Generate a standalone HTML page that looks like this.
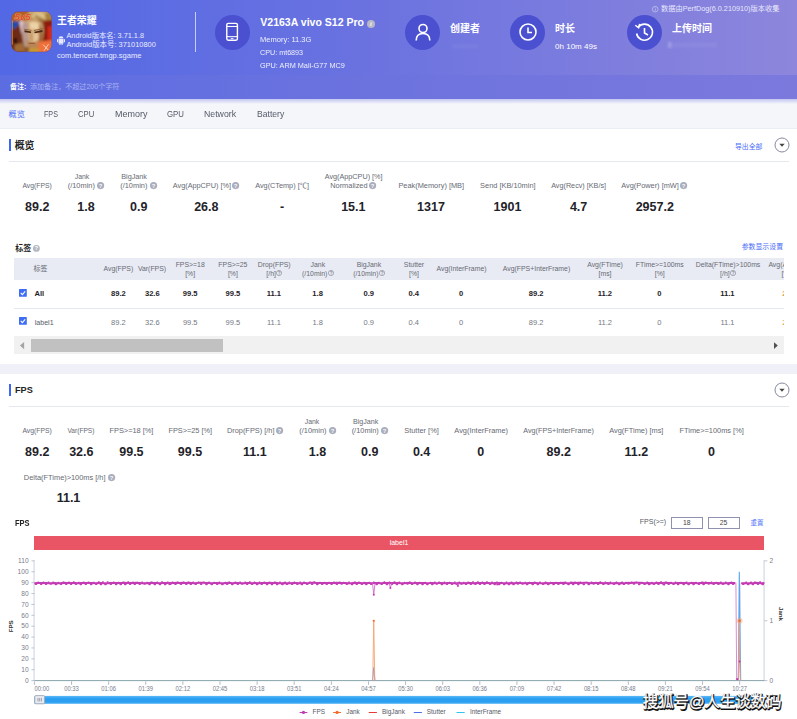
<!DOCTYPE html>
<html lang="zh-CN"><head><meta charset="utf-8"><title>PerfDog</title>
<style>
html,body{margin:0;padding:0;}
body{width:797px;height:719px;position:relative;overflow:hidden;background:#fff;font-family:"Liberation Sans","Noto Sans CJK SC",sans-serif;}
.a{position:absolute;}
.t{position:absolute;white-space:nowrap;}
svg{display:block;overflow:visible}
</style></head><body>
<div class="a" style="left:0;top:0;width:797px;height:99px;background:linear-gradient(90deg,#5268e5 0%,#6a72e0 45%,#8d86dc 100%)"></div>
<div class="a" style="left:0;top:75px;width:797px;height:24px;background:linear-gradient(90deg,#5c6de2 0%,#6d73de 50%,#7c79dd 100%)"></div>
<svg class="a" style="left:10.6px;top:11.2px" width="41" height="41.4" viewBox="-0.5 -0.5 41 41">
<defs><clipPath id="ic"><rect x="0" y="0" width="40" height="40" rx="7"/></clipPath>
<filter id="bl" x="-20%" y="-20%" width="140%" height="140%"><feGaussianBlur stdDeviation="0.9"/></filter>
<filter id="bs" x="-20%" y="-20%" width="140%" height="140%"><feGaussianBlur stdDeviation="0.45"/></filter></defs>
<rect x="-0.5" y="-0.5" width="41" height="41" rx="7.6" fill="#5a52d4"/>
<g clip-path="url(#ic)"><rect width="40" height="40" fill="#8a5428"/>
<g filter="url(#bl)">
<rect x="-2" y="-2" width="24" height="12" fill="#b06028"/>
<path d="M16 -2 H42 V12 L36 10 Q28 6 20 10 Z" fill="#c4a066"/>
<path d="M22 1 Q30 -1 35 4 L33 9 Q27 4 20 7Z" fill="#dcc08a"/>
<path d="M33 2 L42 0 L42 12 L35 10Z" fill="#a8823e"/>
<path d="M24 3 L34 8 L33 10 L23 5Z" fill="#a88446"/>
<path d="M19 6 L27 9 L20 11Z" fill="#b08a4c"/>
<path d="M-2 9.5 L8 10 L7.5 13 L3 17.5 L-2 17.5Z" fill="#1d4db2"/>
<path d="M-2 17 L3 17 L8 12 L10 22 L12 34 L14 42 L-2 42Z" fill="#6e2c12"/>
<path d="M2 27 L5 26 L6 31 L3 32Z" fill="#1a0c08"/>
<path d="M3 33 L11 31 L14 40 L3 40Z" fill="#a06a34"/>
<path d="M7.6 9.5 L12.5 9 L12 16 L10.5 23 L9 17Z" fill="#dcc4d0"/>
<path d="M11.5 10 Q20 6 30 10 Q33 18 31 27 Q28 36 21 38 Q15 36 12.5 28 Q11 18 11.5 10Z" fill="#cfa878"/>
<path d="M18 11 Q24 9 28 12 L27 19 Q23 16 19 18Z" fill="#ecd2a6"/>
<path d="M21.5 21 L27 22 L27 30 L22 31Z" fill="#e6c498"/>
<path d="M12 11 L17 11 Q15 24 19 36 L13 35 Q10 24 10.5 14Z" fill="#b89a92"/>
<path d="M27.5 11 Q33 20 30 30 L25.5 36 Q29 24 27.5 11Z" fill="#9c6030"/>
<path d="M19.2 21 L21.2 21 L21.8 28 L18.6 28Z" fill="#c79868"/>
<path d="M14 27 Q20 34 27 28 L25 36 Q20 39 16 35Z" fill="#b88654"/>
<path d="M32 9 L42 8 L42 31 L31 31 Q34 20 32 9Z" fill="#8e1c10"/>
<path d="M36 15 L42 14 L42 28 L36 28Z" fill="#d42c18"/>
<path d="M27 30 L42 28 L42 42 L25 42Z" fill="#f0703a"/>
<path d="M17 37 L28 36 L27 42 L17 42Z" fill="#c8982e"/>
</g>
<g filter="url(#bs)">
<path d="M13 18.6 L19.5 19.9 L19.5 21.4 L13 20.6Z" fill="#4a2812"/>
<path d="M12.5 17 L20 18.3 L20 19 L12.5 17.8Z" fill="#8a5a34"/>
<path d="M23 20 L31 18.4 L31 20.2 L23 21.6Z" fill="#4a2812"/>
<path d="M22.5 18.4 L31.5 16.6 L31.5 17.4 L22.5 19.2Z" fill="#8a5a34"/>
<path d="M17 31 L24 31 L23 32.3 L18 32.3Z" fill="#9a5a38"/>
<path d="M31.5 33 L37 38.5 M37 32.5 L32.5 39" stroke="#fbe3cc" stroke-width="1" fill="none" opacity="0.85"/>
<text x="3" y="8.6" font-size="9.4" font-weight="700" font-style="italic" fill="#e0502e" stroke="#f0c088" stroke-width="0.5" paint-order="stroke" font-family='"Liberation Sans",sans-serif' textLength="16" lengthAdjust="spacingAndGlyphs">5v5</text>
</g>
<path d="M0.7 9 V33" stroke="#e9a040" stroke-width="1" fill="none" opacity="0.9"/>
</g></svg>
<div class="t" style="left:57.00px;top:13.000px;font-size:9.88px;line-height:15px;font-weight:700;color:#fff;">王者荣耀</div>
<svg class="a" style="left:57px;top:36px" width="8" height="9" viewBox="0 0 16 18"><g fill="#e6e8fb"><path d="M3 6h10v8a1 1 0 0 1-1 1H4a1 1 0 0 1-1-1z"/><path d="M3 5a5 4.5 0 0 1 10 0z"/><rect x="0" y="6" width="2.2" height="6.5" rx="1.1"/><rect x="13.8" y="6" width="2.2" height="6.5" rx="1.1"/><rect x="4.8" y="13" width="2.2" height="5" rx="1.1"/><rect x="9" y="13" width="2.2" height="5" rx="1.1"/></g></svg>
<div class="t" style="left:66.50px;top:30.000px;font-size:7.3px;line-height:11px;font-weight:400;color:#e9ebfd;">Android版本名: 3.71.1.8</div>
<div class="t" style="left:66.50px;top:39.000px;font-size:7.45px;line-height:12px;font-weight:400;color:#e9ebfd;">Android版本号: 371010800</div>
<div class="t" style="left:57.00px;top:50.000px;font-size:7.53px;line-height:12px;font-weight:400;color:#e9ebfd;">com.tencent.tmgp.sgame</div>
<div class="t" style="left:10.00px;top:81.000px;font-size:7.07px;line-height:11px;font-weight:700;color:#fff;">备注:</div>
<div class="t" style="left:30.00px;top:81.000px;font-size:7.06px;line-height:11px;font-weight:400;color:#a9b1f3;">添加备注，不超过200个字符</div>
<div class="a" style="left:195px;top:12px;width:1px;height:40px;background:#c9ccf5"></div>
<div class="a" style="left:214.7px;top:14.5px;width:35px;height:35px;border-radius:50%;background:#4a50d0"></div>
<svg class="a" style="left:225.4px;top:22.2px" width="14.2" height="19.6" viewBox="0 0 16 22"><rect x="2" y="1.5" width="12" height="19" rx="1.6" fill="none" stroke="#fff" stroke-width="1.6"/><line x1="2" y1="5" x2="14" y2="5" stroke="#fff" stroke-width="1.2"/><line x1="2" y1="16.5" x2="14" y2="16.5" stroke="#fff" stroke-width="1.2"/><line x1="6.5" y1="18.6" x2="9.5" y2="18.6" stroke="#fff" stroke-width="1"/></svg>
<div class="t" style="left:260.30px;top:14.000px;font-size:10.52px;line-height:16px;font-weight:700;color:#fff;">V2163A vivo S12 Pro</div>
<svg class="a" style="left:366.7px;top:19.8px" width="8" height="8" viewBox="0 0 10 10"><circle cx="5" cy="5" r="5" fill="#b9b8c6"/><text x="5" y="8" font-size="8" font-weight="700" font-style="italic" text-anchor="middle" fill="#f4f4fa" font-family="Liberation Serif,serif">i</text></svg>
<div class="t" style="left:260.30px;top:34.000px;font-size:7.9px;line-height:12px;font-weight:400;color:#eef0fd;transform:scaleX(0.9556);transform-origin:0 0;">Memory: 11.3G</div>
<div class="t" style="left:260.30px;top:47.000px;font-size:7.9px;line-height:12px;font-weight:400;color:#eef0fd;transform:scaleX(0.9100);transform-origin:0 0;">CPU: mt6893</div>
<div class="t" style="left:260.30px;top:60.000px;font-size:7.9px;line-height:12px;font-weight:400;color:#eef0fd;transform:scaleX(0.9265);transform-origin:0 0;">GPU: ARM Mali-G77 MC9</div>
<div class="a" style="left:405.0px;top:14.5px;width:35px;height:35px;border-radius:50%;background:#4a50d0"></div>
<svg class="a" style="left:413.5px;top:22px" width="18" height="20" viewBox="0 0 18 20"><circle cx="9" cy="6.5" r="4" fill="none" stroke="#fff" stroke-width="1.6"/><path d="M2.2 18.5 Q2.2 11.5 9 11.5 Q15.8 11.5 15.8 18.5" fill="none" stroke="#fff" stroke-width="1.6"/></svg>
<div class="t" style="left:450.00px;top:21.000px;font-size:10.0px;line-height:15px;font-weight:700;color:#fff;">创建者</div>
<div class="a" style="left:510.0px;top:14.5px;width:35px;height:35px;border-radius:50%;background:#4a50d0"></div>
<svg class="a" style="left:517.5px;top:22px" width="20" height="20" viewBox="0 0 20 20"><circle cx="10" cy="10" r="8" fill="none" stroke="#fff" stroke-width="1.6"/><path d="M10 5.5V10.5H14" fill="none" stroke="#fff" stroke-width="1.6"/></svg>
<div class="t" style="left:555.00px;top:21.000px;font-size:10.0px;line-height:15px;font-weight:700;color:#fff;">时长</div>
<div class="t" style="left:555.00px;top:41.000px;font-size:8.04px;line-height:12px;font-weight:400;color:#fff;">0h 10m 49s</div>
<div class="a" style="left:627.0px;top:14.5px;width:35px;height:35px;border-radius:50%;background:#4a50d0"></div>
<svg class="a" style="left:634px;top:21.5px" width="21" height="21" viewBox="0 0 21 21"><path d="M4.2 5.2 A8 8 0 1 1 2.6 11.5" fill="none" stroke="#fff" stroke-width="1.6"/><path d="M1.3 3.2 L4.6 5.8 L5.6 1.8" fill="none" stroke="#fff" stroke-width="1.4"/><path d="M10.5 6V11L14 13" fill="none" stroke="#fff" stroke-width="1.6"/></svg>
<div class="t" style="left:672.00px;top:21.000px;font-size:10.0px;line-height:15px;font-weight:700;color:#fff;">上传时间</div>
<svg class="a" style="left:440px;top:36px" width="300" height="20" viewBox="440 36 300 20"><defs><filter id="sm" x="-20%" y="-50%" width="140%" height="200%"><feGaussianBlur stdDeviation="1.2"/></filter></defs><g filter="url(#sm)" fill="#fff"><rect x="452" y="44.5" width="26" height="3.5" opacity="0.05"/><rect x="668" y="42" width="3.5" height="6" opacity="0.22"/><rect x="672" y="42.5" width="45" height="5" opacity="0.05"/></g></svg>
<svg class="a" style="left:651.5px;top:5.5px" width="6.4" height="6.4" viewBox="0 0 10 10"><circle cx="5" cy="5" r="4.4" fill="none" stroke="#d5d7f7" stroke-width="0.9"/><rect x="4.5" y="4.2" width="1" height="3.2" fill="#d5d7f7"/><rect x="4.5" y="2.4" width="1" height="1" fill="#d5d7f7"/></svg>
<div class="t" style="left:661.00px;top:3.000px;font-size:7.25px;line-height:11px;font-weight:400;color:#e6e7fb;">数据由PerfDog(6.0.210910)版本收集</div>
<div class="a" style="left:0;top:99px;width:797px;height:30px;background:#f5f6fa;border-bottom:0.6px solid #eceef6;box-sizing:border-box"></div>
<div class="a" style="left:0;top:99px;width:797px;height:5px;background:linear-gradient(180deg,rgba(98,108,220,0.35),rgba(98,108,220,0))"></div>
<div class="t" style="left:8.60px;top:108.000px;font-size:8.15px;line-height:13px;font-weight:400;color:#4a6cf7;">概览</div>
<div class="t" style="left:44.40px;top:108.000px;font-size:8.4px;line-height:13px;font-weight:400;color:#555a66;transform:scaleX(0.8534);transform-origin:0 0;">FPS</div>
<div class="t" style="left:78.30px;top:108.000px;font-size:8.4px;line-height:13px;font-weight:400;color:#555a66;transform:scaleX(0.9162);transform-origin:0 0;">CPU</div>
<div class="t" style="left:114.80px;top:108.000px;font-size:8.4px;line-height:13px;font-weight:400;color:#555a66;transform:scaleX(1.0713);transform-origin:0 0;">Memory</div>
<div class="t" style="left:167.10px;top:108.000px;font-size:8.4px;line-height:13px;font-weight:400;color:#555a66;transform:scaleX(0.9312);transform-origin:0 0;">GPU</div>
<div class="t" style="left:204.40px;top:108.000px;font-size:8.4px;line-height:13px;font-weight:400;color:#555a66;transform:scaleX(1.0418);transform-origin:0 0;">Network</div>
<div class="t" style="left:257.00px;top:108.000px;font-size:8.4px;line-height:13px;font-weight:400;color:#555a66;transform:scaleX(1.0252);transform-origin:0 0;">Battery</div>
<div class="a" style="left:0;top:129px;width:797px;height:235px;background:#fff"></div>
<div class="a" style="left:8.6px;top:139px;width:2.2px;height:11.8px;background:#3c66f5"></div>
<div class="t" style="left:14.70px;top:138.000px;font-size:9.9px;line-height:15px;font-weight:700;color:#222;">概览</div>
<div class="t" style="left:735.00px;top:141.000px;font-size:6.85px;line-height:11px;font-weight:400;color:#4a6cf7;">导出全部</div>
<svg class="a" style="left:773.5px;top:137.3px" width="16" height="16" viewBox="0 0 16 16"><circle cx="8" cy="8" r="7" fill="#fff" stroke="#858a9f" stroke-width="1"/><path d="M5.3 6.8h5.4L8 9.7z" fill="#444"/></svg>
<div class="a" style="left:9px;top:160.6px;width:780px;height:1px;background:#e6e8ef"></div>
<div class="t" style="left:22.40px;top:180.000px;font-size:6.81px;line-height:11px;font-weight:400;color:#666a73;">Avg(FPS)</div>
<div class="t" style="left:25.04px;top:198.000px;font-size:12.5px;line-height:18px;font-weight:700;color:#1f2329;">89.2</div>
<div class="t" style="left:74.72px;top:171.000px;font-size:6.9px;line-height:11px;font-weight:400;color:#666a73;">Jank</div>
<div class="t" style="left:67.75px;top:180.000px;font-size:7.4px;line-height:12px;font-weight:400;color:#666a73;">(/10min)</div>
<svg class="a" style="left:97.30px;top:182.30px" width="7.2" height="7.2" viewBox="0 0 10 10"><circle cx="5" cy="5" r="5" fill="#a9adbd"/><text x="5" y="7.9" font-size="8" font-weight="700" text-anchor="middle" fill="#fff" font-family='"Liberation Sans","Noto Sans CJK SC",sans-serif'>?</text></svg>
<div class="t" style="left:77.21px;top:198.000px;font-size:12.5px;line-height:18px;font-weight:700;color:#1f2329;">1.8</div>
<div class="t" style="left:121.30px;top:171.000px;font-size:7.22px;line-height:11px;font-weight:400;color:#666a73;">BigJank</div>
<div class="t" style="left:120.25px;top:180.000px;font-size:7.4px;line-height:12px;font-weight:400;color:#666a73;">(/10min)</div>
<svg class="a" style="left:149.80px;top:182.30px" width="7.2" height="7.2" viewBox="0 0 10 10"><circle cx="5" cy="5" r="5" fill="#a9adbd"/><text x="5" y="7.9" font-size="8" font-weight="700" text-anchor="middle" fill="#fff" font-family='"Liberation Sans","Noto Sans CJK SC",sans-serif'>?</text></svg>
<div class="t" style="left:130.01px;top:198.000px;font-size:12.5px;line-height:18px;font-weight:700;color:#1f2329;">0.9</div>
<div class="t" style="left:172.80px;top:180.000px;font-size:7.29px;line-height:11px;font-weight:400;color:#666a73;">Avg(AppCPU) [%]</div>
<svg class="a" style="left:232.40px;top:182.30px" width="7.2" height="7.2" viewBox="0 0 10 10"><circle cx="5" cy="5" r="5" fill="#a9adbd"/><text x="5" y="7.9" font-size="8" font-weight="700" text-anchor="middle" fill="#fff" font-family='"Liberation Sans","Noto Sans CJK SC",sans-serif'>?</text></svg>
<div class="t" style="left:194.14px;top:198.000px;font-size:12.5px;line-height:18px;font-weight:700;color:#1f2329;">26.8</div>
<div class="t" style="left:255.20px;top:180.000px;font-size:7.31px;line-height:12px;font-weight:400;color:#666a73;">Avg(CTemp) [℃]</div>
<div class="t" style="left:279.92px;top:198.000px;font-size:12.5px;line-height:18px;font-weight:700;color:#1f2329;">-</div>
<div class="t" style="left:324.70px;top:171.000px;font-size:7.25px;line-height:11px;font-weight:400;color:#666a73;">Avg(AppCPU) [%]</div>
<div class="t" style="left:330.21px;top:180.000px;font-size:7.4px;line-height:12px;font-weight:400;color:#666a73;">Normalized</div>
<svg class="a" style="left:369.40px;top:182.30px" width="7.2" height="7.2" viewBox="0 0 10 10"><circle cx="5" cy="5" r="5" fill="#a9adbd"/><text x="5" y="7.9" font-size="8" font-weight="700" text-anchor="middle" fill="#fff" font-family='"Liberation Sans","Noto Sans CJK SC",sans-serif'>?</text></svg>
<div class="t" style="left:341.14px;top:198.000px;font-size:12.5px;line-height:18px;font-weight:700;color:#1f2329;">15.1</div>
<div class="t" style="left:398.40px;top:180.000px;font-size:7.4px;line-height:12px;font-weight:400;color:#666a73;">Peak(Memory) [MB]</div>
<div class="t" style="left:417.10px;top:198.000px;font-size:12.5px;line-height:18px;font-weight:700;color:#1f2329;">1317</div>
<div class="t" style="left:480.12px;top:180.000px;font-size:7.4px;line-height:12px;font-weight:400;color:#666a73;">Send [KB/10min]</div>
<div class="t" style="left:493.60px;top:198.000px;font-size:12.5px;line-height:18px;font-weight:700;color:#1f2329;">1901</div>
<div class="t" style="left:551.20px;top:180.000px;font-size:7.23px;line-height:11px;font-weight:400;color:#666a73;">Avg(Recv) [KB/s]</div>
<div class="t" style="left:569.91px;top:198.000px;font-size:12.5px;line-height:18px;font-weight:700;color:#1f2329;">4.7</div>
<div class="t" style="left:621.20px;top:180.000px;font-size:7.38px;line-height:12px;font-weight:400;color:#666a73;">Avg(Power) [mW]</div>
<svg class="a" style="left:680.30px;top:182.30px" width="7.2" height="7.2" viewBox="0 0 10 10"><circle cx="5" cy="5" r="5" fill="#a9adbd"/><text x="5" y="7.9" font-size="8" font-weight="700" text-anchor="middle" fill="#fff" font-family='"Liberation Sans","Noto Sans CJK SC",sans-serif'>?</text></svg>
<div class="t" style="left:635.68px;top:198.000px;font-size:12.5px;line-height:18px;font-weight:700;color:#1f2329;">2957.2</div>
<div class="t" style="left:15.20px;top:243.000px;font-size:8.0px;line-height:12px;font-weight:700;color:#222;">标签</div>
<svg class="a" style="left:33.20px;top:244.50px" width="6.8" height="6.8" viewBox="0 0 10 10"><circle cx="5" cy="5" r="5" fill="#b4b7c3"/><text x="5" y="7.9" font-size="8" font-weight="700" text-anchor="middle" fill="#fff" font-family='"Liberation Sans","Noto Sans CJK SC",sans-serif'>?</text></svg>
<div class="t" style="left:741.70px;top:241.000px;font-size:6.9px;line-height:11px;font-weight:400;color:#4a6cf7;">参数显示设置</div>
<div class="a" id="tbl" style="left:14.3px;top:258px;width:769.7px;height:96px;overflow:hidden">
<div class="a" style="left:0;top:0;width:770px;height:21.8px;background:#e9ebf4"></div>
<div class="a" style="left:0;top:50.2px;width:770px;height:1px;background:#e4e7f0"></div>
<div class="a" style="left:0;top:77.9px;width:770px;height:1px;background:#e4e7f0"></div>
<div class="t" style="left:19.20px;top:5.000px;font-size:6.95px;line-height:11px;font-weight:400;color:#666a73;">标签</div>
<div class="t" style="left:89.23px;top:5.000px;font-size:6.9px;line-height:11px;font-weight:400;color:#666a73;">Avg(FPS)</div>
<div class="t" style="left:123.60px;top:5.000px;font-size:6.9px;line-height:11px;font-weight:400;color:#666a73;">Var(FPS)</div>
<div class="t" style="left:161.34px;top:1.000px;font-size:6.9px;line-height:11px;font-weight:400;color:#666a73;">FPS&gt;=18</div>
<div class="t" style="left:170.92px;top:10.000px;font-size:6.9px;line-height:11px;font-weight:400;color:#666a73;">[%]</div>
<div class="t" style="left:204.04px;top:1.000px;font-size:6.9px;line-height:11px;font-weight:400;color:#666a73;">FPS&gt;=25</div>
<div class="t" style="left:213.62px;top:10.000px;font-size:6.9px;line-height:11px;font-weight:400;color:#666a73;">[%]</div>
<div class="t" style="left:243.44px;top:1.000px;font-size:6.9px;line-height:11px;font-weight:400;color:#666a73;">Drop(FPS)</div>
<div class="t" style="left:252.01px;top:10.000px;font-size:6.9px;line-height:11px;font-weight:400;color:#666a73;">[/h]</div>
<svg class="a" style="left:261.89px;top:12.40px" width="6" height="6" viewBox="0 0 10 10"><circle cx="5" cy="5" r="4.4" fill="none" stroke="#888c96" stroke-width="1.1"/><text x="5" y="7.8" font-size="7.5" font-weight="700" text-anchor="middle" fill="#888c96" font-family='"Liberation Sans","Noto Sans CJK SC",sans-serif'>?</text></svg>
<div class="t" style="left:296.22px;top:1.000px;font-size:6.9px;line-height:11px;font-weight:400;color:#666a73;">Jank</div>
<div class="t" style="left:287.76px;top:10.000px;font-size:6.9px;line-height:11px;font-weight:400;color:#666a73;">(/10min)</div>
<svg class="a" style="left:313.34px;top:12.40px" width="6" height="6" viewBox="0 0 10 10"><circle cx="5" cy="5" r="4.4" fill="none" stroke="#888c96" stroke-width="1.1"/><text x="5" y="7.8" font-size="7.5" font-weight="700" text-anchor="middle" fill="#888c96" font-family='"Liberation Sans","Noto Sans CJK SC",sans-serif'>?</text></svg>
<div class="t" style="left:342.34px;top:1.000px;font-size:6.9px;line-height:11px;font-weight:400;color:#666a73;">BigJank</div>
<div class="t" style="left:338.86px;top:10.000px;font-size:6.9px;line-height:11px;font-weight:400;color:#666a73;">(/10min)</div>
<svg class="a" style="left:364.44px;top:12.40px" width="6" height="6" viewBox="0 0 10 10"><circle cx="5" cy="5" r="4.4" fill="none" stroke="#888c96" stroke-width="1.1"/><text x="5" y="7.8" font-size="7.5" font-weight="700" text-anchor="middle" fill="#888c96" font-family='"Liberation Sans","Noto Sans CJK SC",sans-serif'>?</text></svg>
<div class="t" style="left:389.55px;top:1.000px;font-size:6.9px;line-height:11px;font-weight:400;color:#666a73;">Stutter</div>
<div class="t" style="left:394.72px;top:10.000px;font-size:6.9px;line-height:11px;font-weight:400;color:#666a73;">[%]</div>
<div class="t" style="left:422.18px;top:5.000px;font-size:6.9px;line-height:11px;font-weight:400;color:#666a73;">Avg(InterFrame)</div>
<div class="t" style="left:488.47px;top:5.000px;font-size:6.9px;line-height:11px;font-weight:400;color:#666a73;">Avg(FPS+InterFrame)</div>
<div class="t" style="left:572.90px;top:1.000px;font-size:6.9px;line-height:11px;font-weight:400;color:#666a73;">Avg(FTime)</div>
<div class="t" style="left:584.19px;top:10.000px;font-size:6.9px;line-height:11px;font-weight:400;color:#666a73;">[ms]</div>
<div class="t" style="left:621.50px;top:1.000px;font-size:6.9px;line-height:11px;font-weight:400;color:#666a73;">FTime&gt;=100ms</div>
<div class="t" style="left:640.52px;top:10.000px;font-size:6.9px;line-height:11px;font-weight:400;color:#666a73;">[%]</div>
<div class="t" style="left:681.38px;top:1.000px;font-size:6.9px;line-height:11px;font-weight:400;color:#666a73;">Delta(FTime)&gt;100ms</div>
<div class="t" style="left:705.81px;top:10.000px;font-size:6.9px;line-height:11px;font-weight:400;color:#666a73;">[/h]</div>
<svg class="a" style="left:715.69px;top:12.40px" width="6" height="6" viewBox="0 0 10 10"><circle cx="5" cy="5" r="4.4" fill="none" stroke="#888c96" stroke-width="1.1"/><text x="5" y="7.8" font-size="7.5" font-weight="700" text-anchor="middle" fill="#888c96" font-family='"Liberation Sans","Noto Sans CJK SC",sans-serif'>?</text></svg>
<div class="t" style="left:754.10px;top:1.000px;font-size:6.9px;line-height:11px;font-weight:400;color:#666a73;">Avg(AppCPU)</div>
<div class="t" style="left:767.20px;top:10.000px;font-size:6.9px;line-height:11px;font-weight:400;color:#666a73;">[%]</div>
<svg class="a" style="left:5.00px;top:31.10px" width="7.8" height="7.8" viewBox="0 0 10 10"><rect width="10" height="10" rx="0.8" fill="#3d6cf5"/><path d="M2.2 5.1L4.3 7.2L7.9 3" fill="none" stroke="#fff" stroke-width="1.4"/></svg>
<div class="t" style="left:20.20px;top:30.000px;font-size:7.59px;line-height:12px;font-weight:700;color:#1f2329;">All</div>
<div class="t" style="left:96.71px;top:30.000px;font-size:7.6px;line-height:12px;font-weight:700;color:#1f2329;">89.2</div>
<div class="t" style="left:130.61px;top:30.000px;font-size:7.6px;line-height:12px;font-weight:700;color:#1f2329;">32.6</div>
<div class="t" style="left:168.51px;top:30.000px;font-size:7.6px;line-height:12px;font-weight:700;color:#1f2329;">99.5</div>
<div class="t" style="left:211.21px;top:30.000px;font-size:7.6px;line-height:12px;font-weight:700;color:#1f2329;">99.5</div>
<div class="t" style="left:252.42px;top:30.000px;font-size:7.6px;line-height:12px;font-weight:700;color:#1f2329;">11.1</div>
<div class="t" style="left:298.02px;top:30.000px;font-size:7.6px;line-height:12px;font-weight:700;color:#1f2329;">1.8</div>
<div class="t" style="left:349.12px;top:30.000px;font-size:7.6px;line-height:12px;font-weight:700;color:#1f2329;">0.9</div>
<div class="t" style="left:394.22px;top:30.000px;font-size:7.6px;line-height:12px;font-weight:700;color:#1f2329;">0.4</div>
<div class="t" style="left:444.79px;top:30.000px;font-size:7.6px;line-height:12px;font-weight:700;color:#1f2329;">0</div>
<div class="t" style="left:514.41px;top:30.000px;font-size:7.6px;line-height:12px;font-weight:700;color:#1f2329;">89.2</div>
<div class="t" style="left:583.42px;top:30.000px;font-size:7.6px;line-height:12px;font-weight:700;color:#1f2329;">11.2</div>
<div class="t" style="left:642.99px;top:30.000px;font-size:7.6px;line-height:12px;font-weight:700;color:#1f2329;">0</div>
<div class="t" style="left:705.92px;top:30.000px;font-size:7.6px;line-height:12px;font-weight:700;color:#1f2329;">11.1</div>
<div class="t" style="left:768.00px;top:30.000px;font-size:7.6px;line-height:12px;font-weight:700;color:#e0a050;">26.8</div>
<svg class="a" style="left:5.00px;top:59.10px" width="7.8" height="7.8" viewBox="0 0 10 10"><rect width="10" height="10" rx="0.8" fill="#3d6cf5"/><path d="M2.2 5.1L4.3 7.2L7.9 3" fill="none" stroke="#fff" stroke-width="1.4"/></svg>
<div class="t" style="left:20.50px;top:59.000px;font-size:7.04px;line-height:11px;font-weight:400;color:#555a66;">label1</div>
<div class="t" style="left:96.80px;top:59.000px;font-size:7.5px;line-height:12px;font-weight:400;color:#747883;">89.2</div>
<div class="t" style="left:130.70px;top:59.000px;font-size:7.5px;line-height:12px;font-weight:400;color:#747883;">32.6</div>
<div class="t" style="left:168.60px;top:59.000px;font-size:7.5px;line-height:12px;font-weight:400;color:#747883;">99.5</div>
<div class="t" style="left:211.30px;top:59.000px;font-size:7.5px;line-height:12px;font-weight:400;color:#747883;">99.5</div>
<div class="t" style="left:252.58px;top:59.000px;font-size:7.5px;line-height:12px;font-weight:400;color:#747883;">11.1</div>
<div class="t" style="left:298.09px;top:59.000px;font-size:7.5px;line-height:12px;font-weight:400;color:#747883;">1.8</div>
<div class="t" style="left:349.19px;top:59.000px;font-size:7.5px;line-height:12px;font-weight:400;color:#747883;">0.9</div>
<div class="t" style="left:394.29px;top:59.000px;font-size:7.5px;line-height:12px;font-weight:400;color:#747883;">0.4</div>
<div class="t" style="left:444.81px;top:59.000px;font-size:7.5px;line-height:12px;font-weight:400;color:#747883;">0</div>
<div class="t" style="left:514.50px;top:59.000px;font-size:7.5px;line-height:12px;font-weight:400;color:#747883;">89.2</div>
<div class="t" style="left:583.58px;top:59.000px;font-size:7.5px;line-height:12px;font-weight:400;color:#747883;">11.2</div>
<div class="t" style="left:643.01px;top:59.000px;font-size:7.5px;line-height:12px;font-weight:400;color:#747883;">0</div>
<div class="t" style="left:706.08px;top:59.000px;font-size:7.5px;line-height:12px;font-weight:400;color:#747883;">11.1</div>
<div class="t" style="left:768.00px;top:59.000px;font-size:7.5px;line-height:12px;font-weight:400;color:#e0a050;">26.8</div>
<div class="a" style="left:0;top:78.4px;width:770px;height:17.2px;background:#f1f1f1"></div>
<div class="a" style="left:16.7px;top:81.1px;width:191.9px;height:12.7px;background:#c1c1c1"></div>
<svg class="a" style="left:5.9px;top:84px" width="4.1" height="7.2" viewBox="0 0 4 7"><path d="M4 0V7L0 3.5z" fill="#a3a3a3"/></svg>
<svg class="a" style="left:759.6px;top:84px" width="3.8" height="7.2" viewBox="0 0 4 7"><path d="M0 0V7L4 3.5z" fill="#505050"/></svg>
</div>
<div class="a" style="left:0;top:364px;width:797px;height:9.7px;background:#f0f1f8"></div>
<div class="a" style="left:0;top:374px;width:797px;height:345px;background:#fff"></div>
<div class="a" style="left:8.6px;top:384.1px;width:2.2px;height:11.8px;background:#3c66f5"></div>
<div class="t" style="left:15.00px;top:383.000px;font-size:9.15px;line-height:14px;font-weight:700;color:#222;">FPS</div>
<svg class="a" style="left:773.5px;top:382px" width="16" height="16" viewBox="0 0 16 16"><circle cx="8" cy="8" r="7" fill="#fff" stroke="#858a9f" stroke-width="1"/><path d="M5.3 6.8h5.4L8 9.7z" fill="#444"/></svg>
<div class="a" style="left:9px;top:406px;width:780px;height:1px;background:#e6e8ef"></div>
<div class="t" style="left:22.40px;top:425.000px;font-size:6.81px;line-height:11px;font-weight:400;color:#666a73;">Avg(FPS)</div>
<div class="t" style="left:25.04px;top:443.000px;font-size:12.5px;line-height:18px;font-weight:700;color:#1f2329;">89.2</div>
<div class="t" style="left:67.40px;top:425.000px;font-size:6.62px;line-height:11px;font-weight:400;color:#666a73;">Var(FPS)</div>
<div class="t" style="left:69.14px;top:443.000px;font-size:12.5px;line-height:18px;font-weight:700;color:#1f2329;">32.6</div>
<div class="t" style="left:109.47px;top:425.000px;font-size:7.4px;line-height:12px;font-weight:400;color:#666a73;">FPS&gt;=18 [%]</div>
<div class="t" style="left:119.24px;top:443.000px;font-size:12.5px;line-height:18px;font-weight:700;color:#1f2329;">99.5</div>
<div class="t" style="left:168.40px;top:425.000px;font-size:7.35px;line-height:12px;font-weight:400;color:#666a73;">FPS&gt;=25 [%]</div>
<div class="t" style="left:177.84px;top:443.000px;font-size:12.5px;line-height:18px;font-weight:700;color:#1f2329;">99.5</div>
<div class="t" style="left:226.90px;top:425.000px;font-size:7.4px;line-height:12px;font-weight:400;color:#666a73;">Drop(FPS) [/h]</div>
<svg class="a" style="left:276.00px;top:427.10px" width="7.2" height="7.2" viewBox="0 0 10 10"><circle cx="5" cy="5" r="5" fill="#a9adbd"/><text x="5" y="7.9" font-size="8" font-weight="700" text-anchor="middle" fill="#fff" font-family='"Liberation Sans","Noto Sans CJK SC",sans-serif'>?</text></svg>
<div class="t" style="left:242.98px;top:443.000px;font-size:12.5px;line-height:18px;font-weight:700;color:#1f2329;">11.1</div>
<div class="t" style="left:304.72px;top:416.000px;font-size:6.9px;line-height:11px;font-weight:400;color:#666a73;">Jank</div>
<div class="t" style="left:299.35px;top:425.000px;font-size:7.4px;line-height:12px;font-weight:400;color:#666a73;">(/10min)</div>
<svg class="a" style="left:328.50px;top:427.10px" width="7.2" height="7.2" viewBox="0 0 10 10"><circle cx="5" cy="5" r="5" fill="#a9adbd"/><text x="5" y="7.9" font-size="8" font-weight="700" text-anchor="middle" fill="#fff" font-family='"Liberation Sans","Noto Sans CJK SC",sans-serif'>?</text></svg>
<div class="t" style="left:308.81px;top:443.000px;font-size:12.5px;line-height:18px;font-weight:700;color:#1f2329;">1.8</div>
<div class="t" style="left:352.90px;top:417.000px;font-size:7.14px;line-height:11px;font-weight:400;color:#666a73;">BigJank</div>
<div class="t" style="left:351.65px;top:425.000px;font-size:7.4px;line-height:12px;font-weight:400;color:#666a73;">(/10min)</div>
<svg class="a" style="left:381.00px;top:427.10px" width="7.2" height="7.2" viewBox="0 0 10 10"><circle cx="5" cy="5" r="5" fill="#a9adbd"/><text x="5" y="7.9" font-size="8" font-weight="700" text-anchor="middle" fill="#fff" font-family='"Liberation Sans","Noto Sans CJK SC",sans-serif'>?</text></svg>
<div class="t" style="left:361.11px;top:443.000px;font-size:12.5px;line-height:18px;font-weight:700;color:#1f2329;">0.9</div>
<div class="t" style="left:404.25px;top:425.000px;font-size:7.4px;line-height:12px;font-weight:400;color:#666a73;">Stutter [%]</div>
<div class="t" style="left:412.91px;top:443.000px;font-size:12.5px;line-height:18px;font-weight:700;color:#1f2329;">0.4</div>
<div class="t" style="left:454.37px;top:425.000px;font-size:7.4px;line-height:12px;font-weight:400;color:#666a73;">Avg(InterFrame)</div>
<div class="t" style="left:477.32px;top:443.000px;font-size:12.5px;line-height:18px;font-weight:700;color:#1f2329;">0</div>
<div class="t" style="left:523.30px;top:425.000px;font-size:7.23px;line-height:11px;font-weight:400;color:#666a73;">Avg(FPS+InterFrame)</div>
<div class="t" style="left:546.54px;top:443.000px;font-size:12.5px;line-height:18px;font-weight:700;color:#1f2329;">89.2</div>
<div class="t" style="left:609.30px;top:425.000px;font-size:7.39px;line-height:12px;font-weight:400;color:#666a73;">Avg(FTime) [ms]</div>
<div class="t" style="left:624.58px;top:443.000px;font-size:12.5px;line-height:18px;font-weight:700;color:#1f2329;">11.2</div>
<div class="t" style="left:679.55px;top:425.000px;font-size:7.4px;line-height:12px;font-weight:400;color:#666a73;">FTime&gt;=100ms [%]</div>
<div class="t" style="left:707.92px;top:443.000px;font-size:12.5px;line-height:18px;font-weight:700;color:#1f2329;">0</div>
<div class="t" style="left:23.87px;top:472.000px;font-size:7.4px;line-height:12px;font-weight:400;color:#666a73;">Delta(FTime)&gt;100ms [/h]</div>
<svg class="a" style="left:108.40px;top:473.60px" width="7.2" height="7.2" viewBox="0 0 10 10"><circle cx="5" cy="5" r="5" fill="#a9adbd"/><text x="5" y="7.9" font-size="8" font-weight="700" text-anchor="middle" fill="#fff" font-family='"Liberation Sans","Noto Sans CJK SC",sans-serif'>?</text></svg>
<div class="t" style="left:56.68px;top:489.000px;font-size:12.5px;line-height:18px;font-weight:700;color:#1f2329;">11.1</div>
<div class="t" style="left:14.50px;top:517.000px;font-size:8.7px;line-height:13px;font-weight:700;color:#222;transform:scaleX(0.8641);transform-origin:0 0;">FPS</div>
<div class="t" style="left:639.80px;top:516.000px;font-size:6.99px;line-height:11px;font-weight:400;color:#555a66;">FPS(&gt;=)</div>
<div class="a" style="left:671.2px;top:517.3px;width:29.7px;height:9.9px;border:0.8px solid #8e91b0;background:#fff"></div>
<div class="t" style="left:683.07px;top:517.000px;font-size:6.8px;line-height:11px;font-weight:400;color:#444;">18</div>
<div class="a" style="left:707.9px;top:517.3px;width:29.7px;height:9.9px;border:0.8px solid #8e91b0;background:#fff"></div>
<div class="t" style="left:719.77px;top:517.000px;font-size:6.8px;line-height:11px;font-weight:400;color:#444;">25</div>
<div class="t" style="left:750.40px;top:518.000px;font-size:6.5px;line-height:10px;font-weight:400;color:#4a6cf7;">重置</div>
<div class="a" style="left:34px;top:536px;width:729.8px;height:13.5px;background:#ea5565"></div>
<div class="t" style="left:389.66px;top:537.000px;font-size:7px;line-height:11px;font-weight:400;color:#fff;">label1</div>
<svg class="a" style="left:0;top:550px" width="797" height="169" viewBox="0 550 797 169" font-family='"Liberation Sans","Noto Sans CJK SC",sans-serif'>
<line x1="34.1" y1="559.9" x2="34.1" y2="681.1" stroke="#dfe2ec" stroke-width="1.6"/>
<line x1="764.1" y1="559.9" x2="764.1" y2="681.1" stroke="#dfe2ec" stroke-width="1.6"/>
<line x1="31.4" y1="680.60" x2="34.4" y2="680.60" stroke="#b9bdc9" stroke-width="0.9"/>
<text x="28.6" y="682.80" font-size="6.6" text-anchor="end" fill="#787d8c">0</text>
<line x1="31.4" y1="669.72" x2="34.4" y2="669.72" stroke="#b9bdc9" stroke-width="0.9"/>
<text x="28.6" y="671.92" font-size="6.6" text-anchor="end" fill="#787d8c">10</text>
<line x1="31.4" y1="658.84" x2="34.4" y2="658.84" stroke="#b9bdc9" stroke-width="0.9"/>
<text x="28.6" y="661.04" font-size="6.6" text-anchor="end" fill="#787d8c">20</text>
<line x1="31.4" y1="647.95" x2="34.4" y2="647.95" stroke="#b9bdc9" stroke-width="0.9"/>
<text x="28.6" y="650.15" font-size="6.6" text-anchor="end" fill="#787d8c">30</text>
<line x1="31.4" y1="637.07" x2="34.4" y2="637.07" stroke="#b9bdc9" stroke-width="0.9"/>
<text x="28.6" y="639.27" font-size="6.6" text-anchor="end" fill="#787d8c">40</text>
<line x1="31.4" y1="626.19" x2="34.4" y2="626.19" stroke="#b9bdc9" stroke-width="0.9"/>
<text x="28.6" y="628.39" font-size="6.6" text-anchor="end" fill="#787d8c">50</text>
<line x1="31.4" y1="615.31" x2="34.4" y2="615.31" stroke="#b9bdc9" stroke-width="0.9"/>
<text x="28.6" y="617.51" font-size="6.6" text-anchor="end" fill="#787d8c">60</text>
<line x1="31.4" y1="604.43" x2="34.4" y2="604.43" stroke="#b9bdc9" stroke-width="0.9"/>
<text x="28.6" y="606.63" font-size="6.6" text-anchor="end" fill="#787d8c">70</text>
<line x1="31.4" y1="593.55" x2="34.4" y2="593.55" stroke="#b9bdc9" stroke-width="0.9"/>
<text x="28.6" y="595.75" font-size="6.6" text-anchor="end" fill="#787d8c">80</text>
<line x1="31.4" y1="582.66" x2="34.4" y2="582.66" stroke="#b9bdc9" stroke-width="0.9"/>
<text x="28.6" y="584.86" font-size="6.6" text-anchor="end" fill="#787d8c">90</text>
<line x1="31.4" y1="571.78" x2="34.4" y2="571.78" stroke="#b9bdc9" stroke-width="0.9"/>
<text x="28.6" y="573.98" font-size="6.6" text-anchor="end" fill="#787d8c">100</text>
<line x1="31.4" y1="560.90" x2="34.4" y2="560.90" stroke="#b9bdc9" stroke-width="0.9"/>
<text x="28.6" y="563.10" font-size="6.6" text-anchor="end" fill="#787d8c">110</text>
<line x1="764.4" y1="680.60" x2="767.4" y2="680.60" stroke="#b9bdc9" stroke-width="0.9"/>
<text x="769.6" y="682.90" font-size="6.6" fill="#787d8c">0</text>
<line x1="764.4" y1="620.75" x2="767.4" y2="620.75" stroke="#b9bdc9" stroke-width="0.9"/>
<text x="769.6" y="623.05" font-size="6.6" fill="#787d8c">1</text>
<line x1="764.4" y1="560.90" x2="767.4" y2="560.90" stroke="#b9bdc9" stroke-width="0.9"/>
<text x="769.6" y="563.20" font-size="6.6" fill="#787d8c">2</text>
<text transform="translate(13.2,626.3) rotate(-90)" font-size="6.2" font-weight="700" text-anchor="middle" fill="#333">FPS</text>
<text transform="translate(778.6,614) rotate(90)" font-size="6.2" font-weight="700" text-anchor="middle" fill="#333">Jank</text>
<line x1="34.40" y1="681.4" x2="34.40" y2="684.8000000000001" stroke="#b4b8c6" stroke-width="1"/>
<text x="41.90" y="691" font-size="6.6" text-anchor="middle" textLength="14.6" lengthAdjust="spacingAndGlyphs" fill="#787d8c">00:00</text>
<line x1="71.52" y1="681.4" x2="71.52" y2="684.8000000000001" stroke="#b4b8c6" stroke-width="1"/>
<text x="71.52" y="691" font-size="6.6" text-anchor="middle" textLength="14.6" lengthAdjust="spacingAndGlyphs" fill="#787d8c">00:33</text>
<line x1="108.64" y1="681.4" x2="108.64" y2="684.8000000000001" stroke="#b4b8c6" stroke-width="1"/>
<text x="108.64" y="691" font-size="6.6" text-anchor="middle" textLength="14.6" lengthAdjust="spacingAndGlyphs" fill="#787d8c">01:06</text>
<line x1="145.76" y1="681.4" x2="145.76" y2="684.8000000000001" stroke="#b4b8c6" stroke-width="1"/>
<text x="145.76" y="691" font-size="6.6" text-anchor="middle" textLength="14.6" lengthAdjust="spacingAndGlyphs" fill="#787d8c">01:39</text>
<line x1="182.87" y1="681.4" x2="182.87" y2="684.8000000000001" stroke="#b4b8c6" stroke-width="1"/>
<text x="182.87" y="691" font-size="6.6" text-anchor="middle" textLength="14.6" lengthAdjust="spacingAndGlyphs" fill="#787d8c">02:12</text>
<line x1="219.99" y1="681.4" x2="219.99" y2="684.8000000000001" stroke="#b4b8c6" stroke-width="1"/>
<text x="219.99" y="691" font-size="6.6" text-anchor="middle" textLength="14.6" lengthAdjust="spacingAndGlyphs" fill="#787d8c">02:45</text>
<line x1="257.11" y1="681.4" x2="257.11" y2="684.8000000000001" stroke="#b4b8c6" stroke-width="1"/>
<text x="257.11" y="691" font-size="6.6" text-anchor="middle" textLength="14.6" lengthAdjust="spacingAndGlyphs" fill="#787d8c">03:18</text>
<line x1="294.23" y1="681.4" x2="294.23" y2="684.8000000000001" stroke="#b4b8c6" stroke-width="1"/>
<text x="294.23" y="691" font-size="6.6" text-anchor="middle" textLength="14.6" lengthAdjust="spacingAndGlyphs" fill="#787d8c">03:51</text>
<line x1="331.35" y1="681.4" x2="331.35" y2="684.8000000000001" stroke="#b4b8c6" stroke-width="1"/>
<text x="331.35" y="691" font-size="6.6" text-anchor="middle" textLength="14.6" lengthAdjust="spacingAndGlyphs" fill="#787d8c">04:24</text>
<line x1="368.47" y1="681.4" x2="368.47" y2="684.8000000000001" stroke="#b4b8c6" stroke-width="1"/>
<text x="368.47" y="691" font-size="6.6" text-anchor="middle" textLength="14.6" lengthAdjust="spacingAndGlyphs" fill="#787d8c">04:57</text>
<line x1="405.59" y1="681.4" x2="405.59" y2="684.8000000000001" stroke="#b4b8c6" stroke-width="1"/>
<text x="405.59" y="691" font-size="6.6" text-anchor="middle" textLength="14.6" lengthAdjust="spacingAndGlyphs" fill="#787d8c">05:30</text>
<line x1="442.71" y1="681.4" x2="442.71" y2="684.8000000000001" stroke="#b4b8c6" stroke-width="1"/>
<text x="442.71" y="691" font-size="6.6" text-anchor="middle" textLength="14.6" lengthAdjust="spacingAndGlyphs" fill="#787d8c">06:03</text>
<line x1="479.82" y1="681.4" x2="479.82" y2="684.8000000000001" stroke="#b4b8c6" stroke-width="1"/>
<text x="479.82" y="691" font-size="6.6" text-anchor="middle" textLength="14.6" lengthAdjust="spacingAndGlyphs" fill="#787d8c">06:36</text>
<line x1="516.94" y1="681.4" x2="516.94" y2="684.8000000000001" stroke="#b4b8c6" stroke-width="1"/>
<text x="516.94" y="691" font-size="6.6" text-anchor="middle" textLength="14.6" lengthAdjust="spacingAndGlyphs" fill="#787d8c">07:09</text>
<line x1="554.06" y1="681.4" x2="554.06" y2="684.8000000000001" stroke="#b4b8c6" stroke-width="1"/>
<text x="554.06" y="691" font-size="6.6" text-anchor="middle" textLength="14.6" lengthAdjust="spacingAndGlyphs" fill="#787d8c">07:42</text>
<line x1="591.18" y1="681.4" x2="591.18" y2="684.8000000000001" stroke="#b4b8c6" stroke-width="1"/>
<text x="591.18" y="691" font-size="6.6" text-anchor="middle" textLength="14.6" lengthAdjust="spacingAndGlyphs" fill="#787d8c">08:15</text>
<line x1="628.30" y1="681.4" x2="628.30" y2="684.8000000000001" stroke="#b4b8c6" stroke-width="1"/>
<text x="628.30" y="691" font-size="6.6" text-anchor="middle" textLength="14.6" lengthAdjust="spacingAndGlyphs" fill="#787d8c">08:48</text>
<line x1="665.42" y1="681.4" x2="665.42" y2="684.8000000000001" stroke="#b4b8c6" stroke-width="1"/>
<text x="665.42" y="691" font-size="6.6" text-anchor="middle" textLength="14.6" lengthAdjust="spacingAndGlyphs" fill="#787d8c">09:21</text>
<line x1="702.54" y1="681.4" x2="702.54" y2="684.8000000000001" stroke="#b4b8c6" stroke-width="1"/>
<text x="702.54" y="691" font-size="6.6" text-anchor="middle" textLength="14.6" lengthAdjust="spacingAndGlyphs" fill="#787d8c">09:54</text>
<line x1="739.65" y1="681.4" x2="739.65" y2="684.8000000000001" stroke="#b4b8c6" stroke-width="1"/>
<text x="739.65" y="691" font-size="6.6" text-anchor="middle" textLength="14.6" lengthAdjust="spacingAndGlyphs" fill="#787d8c">10:27</text>
<line x1="34.4" y1="680.6" x2="764.4" y2="680.6" stroke="#7b9aa2" stroke-width="0.9"/>
<path d="M34.40 583.16 L37.31 583.03 L40.22 583.10 L43.13 583.00 L46.03 582.99 L48.94 583.23 L51.85 583.26 L54.76 582.90 L57.67 583.15 L60.58 583.16 L63.48 582.83 L66.39 583.06 L69.30 582.90 L72.21 583.05 L75.12 582.98 L78.03 583.20 L80.93 582.99 L83.84 582.88 L86.75 583.03 L89.66 582.94 L92.57 582.97 L95.48 583.23 L98.38 582.93 L101.29 583.00 L104.20 583.13 L107.11 583.25 L110.02 582.89 L112.93 583.06 L115.83 582.95 L118.74 582.88 L121.65 582.95 L124.56 582.86 L127.47 583.09 L130.38 582.91 L133.28 583.07 L136.19 582.85 L139.10 582.88 L142.01 583.22 L144.92 583.20 L147.83 583.17 L150.73 582.84 L153.64 583.07 L156.55 582.99 L159.46 583.13 L162.37 583.04 L165.28 583.09 L168.18 583.11 L171.09 583.01 L174.00 583.01 L176.91 582.87 L179.82 582.97 L182.73 582.86 L185.64 582.89 L188.54 582.83 L191.45 582.97 L194.36 583.19 L197.27 582.89 L200.18 582.84 L203.09 582.87 L205.99 583.01 L208.90 582.95 L211.81 583.17 L214.72 582.90 L217.63 583.01 L220.54 583.14 L223.44 583.23 L226.35 582.89 L229.26 582.83 L232.17 583.22 L235.08 582.91 L237.99 583.08 L240.89 583.20 L243.80 583.13 L246.71 582.93 L249.62 582.88 L252.53 583.24 L255.44 582.99 L258.34 583.24 L261.25 582.95 L264.16 583.12 L267.07 582.88 L269.98 582.84 L272.89 583.04 L275.79 582.83 L278.70 583.13 L281.61 583.23 L284.52 583.00 L287.43 583.25 L290.34 583.18 L293.24 583.08 L296.15 583.00 L299.06 583.19 L301.97 583.24 L304.88 582.88 L307.79 583.13 L310.69 582.84 L313.60 582.87 L316.51 583.10 L319.42 583.06 L322.33 583.04 L325.24 582.98 L328.15 583.00 L331.05 583.02 L333.96 582.99 L336.87 582.85 L339.78 583.04 L342.69 583.07 L345.60 582.95 L348.50 583.16 L351.41 583.13 L354.32 582.84 L357.23 583.04 L360.14 583.02 L363.05 583.26 L365.95 583.08 L368.86 583.01 L371.77 583.25 L374.68 582.99 L377.59 582.99 L380.50 583.24 L383.40 582.99 L386.31 583.06 L389.22 582.97 L392.13 583.11 L395.04 582.95 L397.95 582.94 L400.85 583.25 L403.76 583.24 L406.67 582.97 L409.58 582.84 L412.49 583.15 L415.40 583.06 L418.30 583.00 L421.21 583.12 L424.12 583.10 L427.03 583.13 L429.94 583.10 L432.85 583.00 L435.75 583.13 L438.66 583.10 L441.57 582.93 L444.48 583.25 L447.39 583.01 L450.30 582.94 L453.20 583.13 L456.11 583.17 L459.02 582.91 L461.93 583.16 L464.84 583.18 L467.75 583.07 L470.65 582.96 L473.56 583.22 L476.47 583.12 L479.38 583.12 L482.29 582.90 L485.20 583.07 L488.11 582.89 L491.01 583.19 L493.92 583.12 L496.83 582.98 L499.74 582.88 L502.65 583.07 L505.56 583.16 L508.46 583.21 L511.37 583.03 L514.28 583.18 L517.19 582.91 L520.10 582.90 L523.01 583.18 L525.91 583.14 L528.82 582.91 L531.73 582.98 L534.64 582.91 L537.55 583.11 L540.46 583.21 L543.36 583.14 L546.27 582.92 L549.18 583.14 L552.09 583.11 L555.00 583.08 L557.91 583.08 L560.81 583.08 L563.72 582.86 L566.63 583.19 L569.54 583.26 L572.45 582.85 L575.36 582.88 L578.26 582.83 L581.17 583.07 L584.08 582.85 L586.99 582.86 L589.90 583.17 L592.81 582.94 L595.71 582.90 L598.62 582.97 L601.53 583.04 L604.44 583.14 L607.35 583.11 L610.26 583.16 L613.16 583.23 L616.07 583.01 L618.98 583.14 L621.89 582.91 L624.80 583.24 L627.71 582.87 L630.62 582.96 L633.52 582.86 L636.43 582.87 L639.34 582.87 L642.25 583.01 L645.16 583.26 L648.07 582.94 L650.97 583.19 L653.88 583.13 L656.79 582.97 L659.70 583.03 L662.61 583.08 L665.52 582.85 L668.42 583.00 L671.33 583.11 L674.24 583.15 L677.15 582.89 L680.06 583.05 L682.97 582.92 L685.87 583.11 L688.78 583.18 L691.69 583.03 L694.60 582.91 L697.51 583.19 L700.42 582.92 L703.32 582.86 L706.23 582.91 L709.14 582.90 L712.05 583.26 L714.96 582.99 L717.87 582.89 L720.77 583.24 L723.68 583.14 L726.59 583.15 L729.50 583.03 L732.41 583.08 L735.32 583.06" fill="none" stroke="#c33cb4" stroke-width="2" stroke-linejoin="round"/>
<path d="M741.13 583.26 L744.04 583.24 L746.95 583.21 L749.86 583.21 L752.77 583.23 L755.67 582.84 L758.58 582.89 L761.49 583.22 L764.40 583.04" fill="none" stroke="#c33cb4" stroke-width="2" stroke-linejoin="round"/>
<path d="M735.90 582.77 L736.70 679.51 L738.50 679.51 L739.50 661.56 L739.80 582.77" fill="none" stroke="#d77fcd" stroke-width="0.9" stroke-linejoin="round"/>
<path d="M35.65 583.98h0.7 M40.80 584.12h0.7 M45.63 583.89h0.7 M50.51 583.86h0.7 M55.61 584.22h0.7 M60.73 584.04h0.7 M65.94 584.03h0.7 M70.68 584.09h0.7 M75.61 584.04h0.7 M80.48 584.27h0.7 M85.44 583.89h0.7 M90.83 584.22h0.7 M95.90 583.88h0.7 M100.54 584.21h0.7 M105.14 584.26h0.7 M110.48 583.88h0.7 M115.82 584.30h0.7 M120.35 584.21h0.7 M124.96 584.20h0.7 M129.78 584.11h0.7 M134.46 583.95h0.7 M139.36 584.01h0.7 M144.28 583.87h0.7 M149.19 584.20h0.7 M154.44 584.16h0.7 M159.59 584.27h0.7 M164.84 584.28h0.7 M170.05 583.92h0.7 M175.14 583.98h0.7 M180.59 583.97h0.7 M185.95 584.12h0.7 M190.47 584.06h0.7 M195.33 583.98h0.7 M200.82 584.06h0.7 M206.16 584.23h0.7 M211.38 584.25h0.7 M216.84 584.06h0.7 M222.05 584.16h0.7 M226.80 583.92h0.7 M232.00 584.25h0.7 M237.37 583.98h0.7 M241.95 583.87h0.7 M246.81 584.11h0.7 M251.64 584.04h0.7 M256.73 584.30h0.7 M261.35 583.96h0.7 M266.74 584.28h0.7 M271.61 584.21h0.7 M276.79 584.15h0.7 M282.04 584.30h0.7 M286.65 584.07h0.7 M291.83 584.11h0.7 M296.96 583.91h0.7 M301.59 584.29h0.7 M306.81 584.12h0.7 M311.76 583.98h0.7 M316.98 584.20h0.7 M321.84 583.96h0.7 M326.38 584.08h0.7 M331.24 583.99h0.7 M336.51 584.00h0.7 M341.28 583.87h0.7 M346.50 583.92h0.7 M351.75 584.23h0.7 M356.39 584.02h0.7 M361.46 583.92h0.7 M365.99 584.23h0.7 M370.88 584.10h0.7 M376.35 584.17h0.7 M381.34 584.12h0.7 M386.61 584.15h0.7 M391.57 583.92h0.7 M396.57 584.15h0.7 M402.03 584.27h0.7 M407.15 583.85h0.7 M411.73 584.09h0.7 M417.10 584.17h0.7 M422.20 584.29h0.7 M427.04 584.23h0.7 M431.98 584.20h0.7 M436.52 583.86h0.7 M441.52 584.17h0.7 M446.67 583.98h0.7 M451.57 583.91h0.7 M456.44 584.01h0.7 M461.16 583.83h0.7 M465.81 584.05h0.7 M470.48 584.03h0.7 M475.09 583.91h0.7 M479.61 584.05h0.7 M484.16 584.03h0.7 M489.63 583.93h0.7 M494.29 584.14h0.7 M498.84 584.19h0.7 M503.81 584.29h0.7 M508.57 584.23h0.7 M513.17 584.17h0.7 M517.67 583.84h0.7 M522.21 583.85h0.7 M526.91 584.31h0.7 M532.33 584.29h0.7 M537.43 584.30h0.7 M542.78 583.88h0.7 M547.96 584.29h0.7 M553.20 584.24h0.7 M558.06 584.03h0.7 M563.04 583.96h0.7 M568.15 584.18h0.7 M572.80 584.18h0.7 M578.06 584.16h0.7 M583.40 584.15h0.7 M588.35 584.27h0.7 M593.22 583.86h0.7 M597.83 584.11h0.7 M602.98 583.94h0.7 M608.12 584.12h0.7 M613.59 583.93h0.7 M618.87 584.13h0.7 M623.56 583.91h0.7 M628.17 583.84h0.7 M633.56 583.87h0.7 M638.89 584.13h0.7 M644.26 584.00h0.7 M648.87 584.24h0.7 M653.58 584.09h0.7 M658.16 584.00h0.7 M663.21 584.19h0.7 M668.32 583.93h0.7 M673.15 584.04h0.7 M677.82 584.29h0.7 M683.30 584.13h0.7 M688.22 584.30h0.7 M693.21 584.21h0.7 M698.63 583.97h0.7 M703.22 584.19h0.7 M708.36 583.84h0.7 M713.29 584.00h0.7 M718.08 583.88h0.7 M722.66 583.90h0.7 M728.14 584.31h0.7 M732.80 583.98h0.7 M742.87 584.00h0.7 M747.83 584.27h0.7 M752.57 584.23h0.7 M757.60 584.09h0.7 M762.31 584.21h0.7" fill="none" stroke="#c33cb4" stroke-width="2" stroke-linecap="round"/>
<path d="M38.01 582.22h0.6 M43.21 582.16h0.6 M48.23 582.37h0.6 M52.73 582.23h0.6 M58.04 582.40h0.6 M63.16 582.28h0.6 M68.68 582.27h0.6 M73.43 582.11h0.6 M78.54 582.46h0.6 M83.32 582.19h0.6 M88.31 582.35h0.6 M93.55 582.38h0.6 M98.53 582.08h0.6 M102.63 582.12h0.6 M107.37 582.09h0.6 M113.37 582.35h0.6 M118.45 582.40h0.6 M122.91 582.37h0.6 M127.94 582.11h0.6 M132.66 582.18h0.6 M137.13 582.38h0.6 M141.80 582.22h0.6 M146.83 582.47h0.6 M151.40 582.36h0.6 M157.01 582.28h0.6 M161.79 582.12h0.6 M167.40 582.26h0.6 M172.37 582.16h0.6 M177.42 582.36h0.6 M183.35 582.25h0.6 M188.26 582.17h0.6 M192.90 582.15h0.6 M198.15 582.14h0.6 M203.47 582.27h0.6 M208.76 582.28h0.6 M213.83 582.38h0.6 M219.12 582.18h0.6 M225.06 582.42h0.6 M229.11 582.16h0.6 M234.95 582.18h0.6 M239.84 582.37h0.6 M244.84 582.20h0.6 M249.53 582.09h0.6 M254.18 582.17h0.6 M259.17 582.30h0.6 M264.06 582.13h0.6 M268.88 582.46h0.6 M274.42 582.20h0.6 M279.64 582.19h0.6 M284.76 582.30h0.6 M289.06 582.37h0.6 M294.06 582.34h0.6 M299.90 582.34h0.6 M303.78 582.22h0.6 M309.41 582.34h0.6 M313.99 582.11h0.6 M319.57 582.38h0.6 M324.27 582.43h0.6 M328.68 582.39h0.6 M333.69 582.30h0.6 M339.40 582.13h0.6 M343.44 582.39h0.6 M348.74 582.25h0.6 M354.55 582.32h0.6 M358.64 582.29h0.6 M363.76 582.40h0.6 M368.93 582.46h0.6 M373.51 582.34h0.6 M378.70 582.43h0.6 M384.11 582.08h0.6 M389.15 582.29h0.6 M394.15 582.10h0.6 M399.06 582.31h0.6 M404.21 582.40h0.6 M409.56 582.18h0.6 M414.71 582.21h0.6 M419.28 582.43h0.6 M424.97 582.38h0.6 M430.03 582.43h0.6 M434.52 582.13h0.6 M438.77 582.15h0.6 M444.11 582.25h0.6 M449.18 582.39h0.6 M454.52 582.37h0.6 M459.02 582.32h0.6 M463.42 582.40h0.6 M468.05 582.17h0.6 M472.69 582.09h0.6 M477.63 582.11h0.6 M482.07 582.36h0.6 M486.61 582.09h0.6 M491.77 582.27h0.6 M496.69 582.13h0.6 M501.17 582.40h0.6 M506.16 582.18h0.6 M511.25 582.22h0.6 M516.19 582.32h0.6 M519.81 582.15h0.6 M524.91 582.44h0.6 M529.44 582.40h0.6 M534.41 582.20h0.6 M539.57 582.20h0.6 M545.22 582.22h0.6 M550.19 582.38h0.6 M555.80 582.45h0.6 M560.34 582.39h0.6 M565.26 582.37h0.6 M570.58 582.28h0.6 M574.87 582.27h0.6 M580.21 582.18h0.6 M586.33 582.43h0.6 M591.13 582.22h0.6 M595.67 582.47h0.6 M599.99 582.12h0.6 M605.07 582.14h0.6 M610.18 582.17h0.6 M616.20 582.25h0.6 M621.71 582.30h0.6 M625.69 582.41h0.6 M631.19 582.16h0.6 M636.08 582.17h0.6 M641.58 582.39h0.6 M646.92 582.26h0.6 M651.52 582.41h0.6 M656.10 582.37h0.6 M660.69 582.11h0.6 M665.68 582.34h0.6 M670.72 582.48h0.6 M675.29 582.17h0.6 M680.59 582.43h0.6 M686.29 582.30h0.6 M691.18 582.46h0.6 M695.66 582.48h0.6 M701.61 582.16h0.6 M705.57 582.29h0.6 M711.16 582.19h0.6 M716.09 582.38h0.6 M720.43 582.25h0.6 M725.47 582.36h0.6 M731.06 582.23h0.6 M745.77 582.20h0.6 M750.69 582.20h0.6 M754.63 582.14h0.6 M759.82 582.10h0.6" fill="none" stroke="#c33cb4" stroke-width="1.5" stroke-linecap="round"/>
<path d="M372.45 582.77 L373.75 594.63 L375.05 582.77" fill="none" stroke="#cf5cc3" stroke-width="0.8"/>
<circle cx="373.75" cy="594.63" r="1" fill="#c33cb4"/>
<path d="M389.10 582.77 L390.40 588.10 L391.70 582.77" fill="none" stroke="#cf5cc3" stroke-width="0.8"/>
<circle cx="390.40" cy="588.10" r="1" fill="#c33cb4"/>
<path d="M456.59 582.77 L457.89 585.93 L459.19 582.77" fill="none" stroke="#cf5cc3" stroke-width="0.8"/>
<circle cx="457.89" cy="585.93" r="1" fill="#c33cb4"/>
<path d="M495.96 582.77 L497.26 584.62 L498.56 582.77" fill="none" stroke="#cf5cc3" stroke-width="0.8"/>
<circle cx="497.26" cy="584.62" r="1" fill="#c33cb4"/>
<path d="M168.08 582.77 L169.38 584.19 L170.68 582.77" fill="none" stroke="#cf5cc3" stroke-width="0.8"/>
<circle cx="169.38" cy="584.19" r="1" fill="#c33cb4"/>
<path d="M662.99 582.77 L664.29 584.40 L665.59 582.77" fill="none" stroke="#cf5cc3" stroke-width="0.8"/>
<circle cx="664.29" cy="584.40" r="1" fill="#c33cb4"/>
<path d="M372.55 680.6 L373.75 667.54 L374.95 680.6" fill="none" stroke="#6f8ff0" stroke-width="0.9"/>
<path d="M372.75 680.6 L373.75 620.75 L374.75 680.6" fill="none" stroke="#f6a270" stroke-width="0.9"/>
<circle cx="373.75" cy="620.75" r="1.1" fill="#f26b2a"/>
<path d="M738.30 680.6 L739.30 571.78 L740.70 680.6" fill="none" stroke="#5aa8f2" stroke-width="1.1"/>
<path d="M738.30 680.6 L739.30 620.75 L740.30 680.6" fill="none" stroke="#f6a270" stroke-width="0.8"/>
<circle cx="739.60" cy="620.75" r="3" fill="#f6a270" opacity="0.45"/>
<circle cx="739.60" cy="620.75" r="1.3" fill="#f26b2a"/>
<circle cx="739.60" cy="661.56" r="1" fill="#c33cb4"/>
<circle cx="737.20" cy="679.19" r="1.1" fill="#c33cb4"/>
<defs><linearGradient id="sl" x1="0" y1="0" x2="0" y2="1"><stop offset="0" stop-color="#5bbaf6"/><stop offset="0.35" stop-color="#2b9ff1"/><stop offset="0.75" stop-color="#2b9ff1"/><stop offset="1" stop-color="#4fb2f5"/></linearGradient></defs>
<rect x="34.4" y="695.9" width="730.0" height="7.9" fill="url(#sl)"/>
<rect x="34.8" y="695.6" width="9.8" height="8.2" rx="1" fill="#e9e9ee" stroke="#9aa0ad" stroke-width="0.8"/>
<line x1="38.0" y1="698" x2="38.0" y2="701.4" stroke="#7d8290" stroke-width="0.7"/>
<line x1="39.699999999999996" y1="698" x2="39.699999999999996" y2="701.4" stroke="#7d8290" stroke-width="0.7"/>
<line x1="41.4" y1="698" x2="41.4" y2="701.4" stroke="#7d8290" stroke-width="0.7"/>
<line x1="299.6" y1="712.5" x2="307.4" y2="712.5" stroke="#c33cb4" stroke-width="1"/>
<circle cx="303.5" cy="712.4" r="1.6" fill="#c33cb4"/>
<text x="312.6" y="714.3" font-size="6.4" fill="#555a66">FPS</text>
<line x1="333.2" y1="712.5" x2="341" y2="712.5" stroke="#f26b2a" stroke-width="1"/>
<circle cx="337.1" cy="712.4" r="1.6" fill="#f26b2a"/>
<text x="346.2" y="714.3" font-size="6.4" fill="#555a66">Jank</text>
<line x1="368.7" y1="712.5" x2="376.9" y2="712.5" stroke="#e23b3b" stroke-width="1"/>
<text x="382.1" y="714.3" font-size="6.4" fill="#555a66">BigJank</text>
<line x1="413.8" y1="712.5" x2="421.9" y2="712.5" stroke="#4b6fe8" stroke-width="1"/>
<text x="426.8" y="714.3" font-size="6.4" fill="#555a66">Stutter</text>
<line x1="456.5" y1="712.5" x2="464.7" y2="712.5" stroke="#2cc5ee" stroke-width="1"/>
<text x="469.9" y="714.3" font-size="6.4" fill="#555a66">InterFrame</text>
<text x="643.4" y="707.9" font-size="15.4" font-weight="400" fill="#111" stroke="#111" stroke-width="1.7" stroke-linejoin="round" textLength="138.6" lengthAdjust="spacingAndGlyphs">搜狐号@人生谈数码</text>
<text x="642.8" y="707.2" font-size="15.4" font-weight="400" fill="#fff" stroke="#fff" stroke-width="0.35" textLength="138.6" lengthAdjust="spacingAndGlyphs">搜狐号@人生谈数码</text>
</svg>
</body></html>
